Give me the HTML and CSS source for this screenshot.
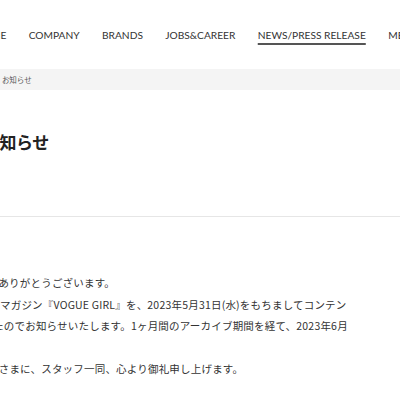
FILE: index.html
```html
<!DOCTYPE html>
<html lang="ja">
<head>
<meta charset="utf-8">
<title>お知らせ</title>
<link rel="stylesheet" href="styles.css">
</head>
<body>
<header class="header">
  <nav class="nav">
    <a class="nav-item">HOME</a>
    <a class="nav-item">COMPANY</a>
    <a class="nav-item">BRANDS</a>
    <a class="nav-item">JOBS&amp;CAREER</a>
    <a class="nav-item is-active">NEWS/PRESS RELEASE</a>
    <a class="nav-item">MEDIA</a>
  </nav>
</header>
<div class="crumb">
  <div class="crumb-inner"><span class="crumb-home">TOP</span><span class="crumb-sep">›</span><span class="crumb-current">お知らせ</span></div>
</div>
<main class="content">
  <h1 class="title">お知らせ</h1>
  <hr class="rule">
  <div class="body">
    <p class="line l1">誠にありがとうございます。</p>
    <p class="line l2">ブマガジン『VOGUE GIRL』を、2023年5月31日(水)をもちましてコンテン</p>
    <p class="line l3">りましたのでお知らせいたします。1ヶ月間のアーカイブ期間を経て、2023年6月</p>
    <p class="line l4">&nbsp;</p>
    <p class="line l5">皆さまに、スタッフ一同、心より御礼申し上げます。</p>
  </div>
</main>
</body>
</html>
```
FILE: styles.css
```css
html, body {
  margin: 0;
  padding: 0;
  background: #fff;
}
body {
  width: 400px;
  overflow: hidden;
  font-family: "Noto Sans CJK JP", "Noto Sans", sans-serif;
  color: #333;
}
.header {
  height: 69px;
  display: flex;
  align-items: center;
}
.nav {
  display: flex;
  gap: 22.4px;
  margin-left: -25px;
  white-space: nowrap;
  font-family: Lato, "Open Sans", sans-serif;
  font-size: 10.2px;
  letter-spacing: 0;
  color: #333;
}
.nav-item {
  color: #333;
  text-decoration: none;
}
.nav-item.is-active {
  text-decoration: underline;
  text-decoration-thickness: 1.5px;
  text-underline-offset: 4px;
  text-decoration-color: #555;
}
.crumb {
  height: 21px;
  background: #f4f4f4;
  display: flex;
  align-items: center;
  overflow: hidden;
}
.crumb-inner {
  display: flex;
  align-items: center;
  gap: 2px;
  margin-left: -19px;
  font-size: 7.5px;
  color: #555;
  white-space: nowrap;
}
.title {
  margin: 40px 0 0 -17px;
  font-size: 17px;
  line-height: 24px;
  font-weight: 700;
  letter-spacing: -0.5px;
  color: #222;
  white-space: nowrap;
}
.rule {
  margin: 62px 0 0;
  border: 0;
  border-top: 1px solid #e6e6e6;
  height: 0;
}
.body {
  margin-top: 55px;
}
.line {
  margin: 0;
  font-size: 10.5px;
  line-height: 21.5px;
  letter-spacing: 0.2px;
  color: #333;
  white-space: nowrap;
}
.l1 { text-indent: -23px; }
.l2 { text-indent: -10.7px; }
.l3 { text-indent: -39px; }
.l5 { text-indent: -12px; }
```
